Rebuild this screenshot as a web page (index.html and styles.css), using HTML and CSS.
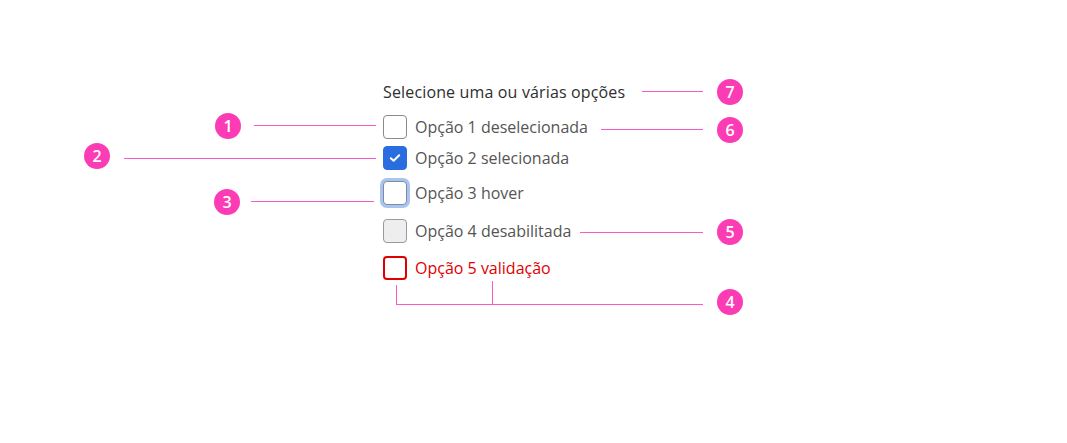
FILE: index.html
```html
<!DOCTYPE html>
<html lang="pt">
<head>
<meta charset="utf-8">
<link rel="stylesheet" href="styles.css">
</head>
<body>
<div class="stage">
  <div class="group">
    <div class="title">Selecione uma ou várias opções</div>
    <label class="row r1"><span class="box"></span><span class="lbl">Opção 1 deselecionada</span></label>
    <label class="row r2"><span class="box checked"><svg width="12" height="10" viewBox="0 0 12 10"><path d="M1.8 5.2 L4.6 7.8 L10.2 2.2" fill="none" stroke="#fff" stroke-width="2" stroke-linecap="round" stroke-linejoin="round"/></svg></span><span class="lbl">Opção 2 selecionada</span></label>
    <label class="row r3"><span class="box hover"></span><span class="lbl">Opção 3 hover</span></label>
    <label class="row r4"><span class="box disabled"></span><span class="lbl">Opção 4 desabilitada</span></label>
    <label class="row r5 invalid"><span class="box error"></span><span class="lbl">Opção 5 validação</span></label>
  </div>

  <div class="ln h" style="left:254px;top:125px;width:122px"></div>
  <div class="ln h" style="left:124px;top:158px;width:252px"></div>
  <div class="ln h" style="left:251px;top:201px;width:123px"></div>
  <div class="ln h" style="left:642px;top:91px;width:61px"></div>
  <div class="ln h" style="left:601px;top:129px;width:102px"></div>
  <div class="ln h" style="left:580px;top:232px;width:123px"></div>
  <div class="ln h" style="left:396px;top:304px;width:307px"></div>
  <div class="ln v" style="left:396px;top:285px;height:20px"></div>
  <div class="ln v" style="left:492px;top:281px;height:24px"></div>

  <span class="badge" style="left:215px;top:113px">1</span>
  <span class="badge" style="left:84px;top:143px">2</span>
  <span class="badge" style="left:214px;top:189px">3</span>
  <span class="badge" style="left:717px;top:289px">4</span>
  <span class="badge" style="left:717px;top:219px">5</span>
  <span class="badge" style="left:717px;top:117px">6</span>
  <span class="badge" style="left:717px;top:79px">7</span>
</div>
</body>
</html>
```

FILE: styles.css
```css
html, body {
  margin: 0;
  padding: 0;
  background: #fff;
}
.stage {
  position: relative;
  width: 1067px;
  height: 443px;
  font-family: "Open Sans", "Noto Sans", sans-serif;
}
.group {
  display: flex;
  flex-direction: column;
  padding: 82px 0 0 383px;
}
.title {
  font-size: 16px;
  line-height: 20px;
  font-weight: 500;
  color: #2e2e2e;
  letter-spacing: 0.15px;
}
.row {
  display: flex;
  align-items: center;
  gap: 8px;
  height: 24px;
}
.r1 { margin-top: 13px; }
.r2 { margin-top: 7px; }
.r3 { margin-top: 11px; }
.r4 { margin-top: 14px; }
.r5 { margin-top: 13px; }
.box {
  box-sizing: border-box;
  width: 24px;
  height: 24px;
  border: 1px solid #8a8a8a;
  border-radius: 4px;
  background: #fff;
  display: flex;
  align-items: center;
  justify-content: center;
  flex: none;
}
.box.checked {
  background: #2a6de0;
  border-color: #2a6de0;
}
.box.hover {
  border-color: #8a8a8a;
  box-shadow: 0 0 0 3px #a6c4f4;
}
.box.disabled {
  background: #eeeeee;
  border-color: #9a9a9a;
}
.box.error {
  border: 2px solid #e00000;
}
.lbl {
  font-size: 16px;
  line-height: 20px;
  color: #555;
}
.invalid .lbl { color: #e00000; }
.ln {
  position: absolute;
  background: #fb5ac6;
}
.ln.h { height: 1px; }
.ln.v { width: 1px; }
.badge {
  position: absolute;
  width: 26px;
  height: 26px;
  border-radius: 50%;
  background: #fc3cb5;
  color: #fff;
  font-size: 16px;
  font-weight: 600;
  line-height: 26px;
  text-align: center;
}
```
